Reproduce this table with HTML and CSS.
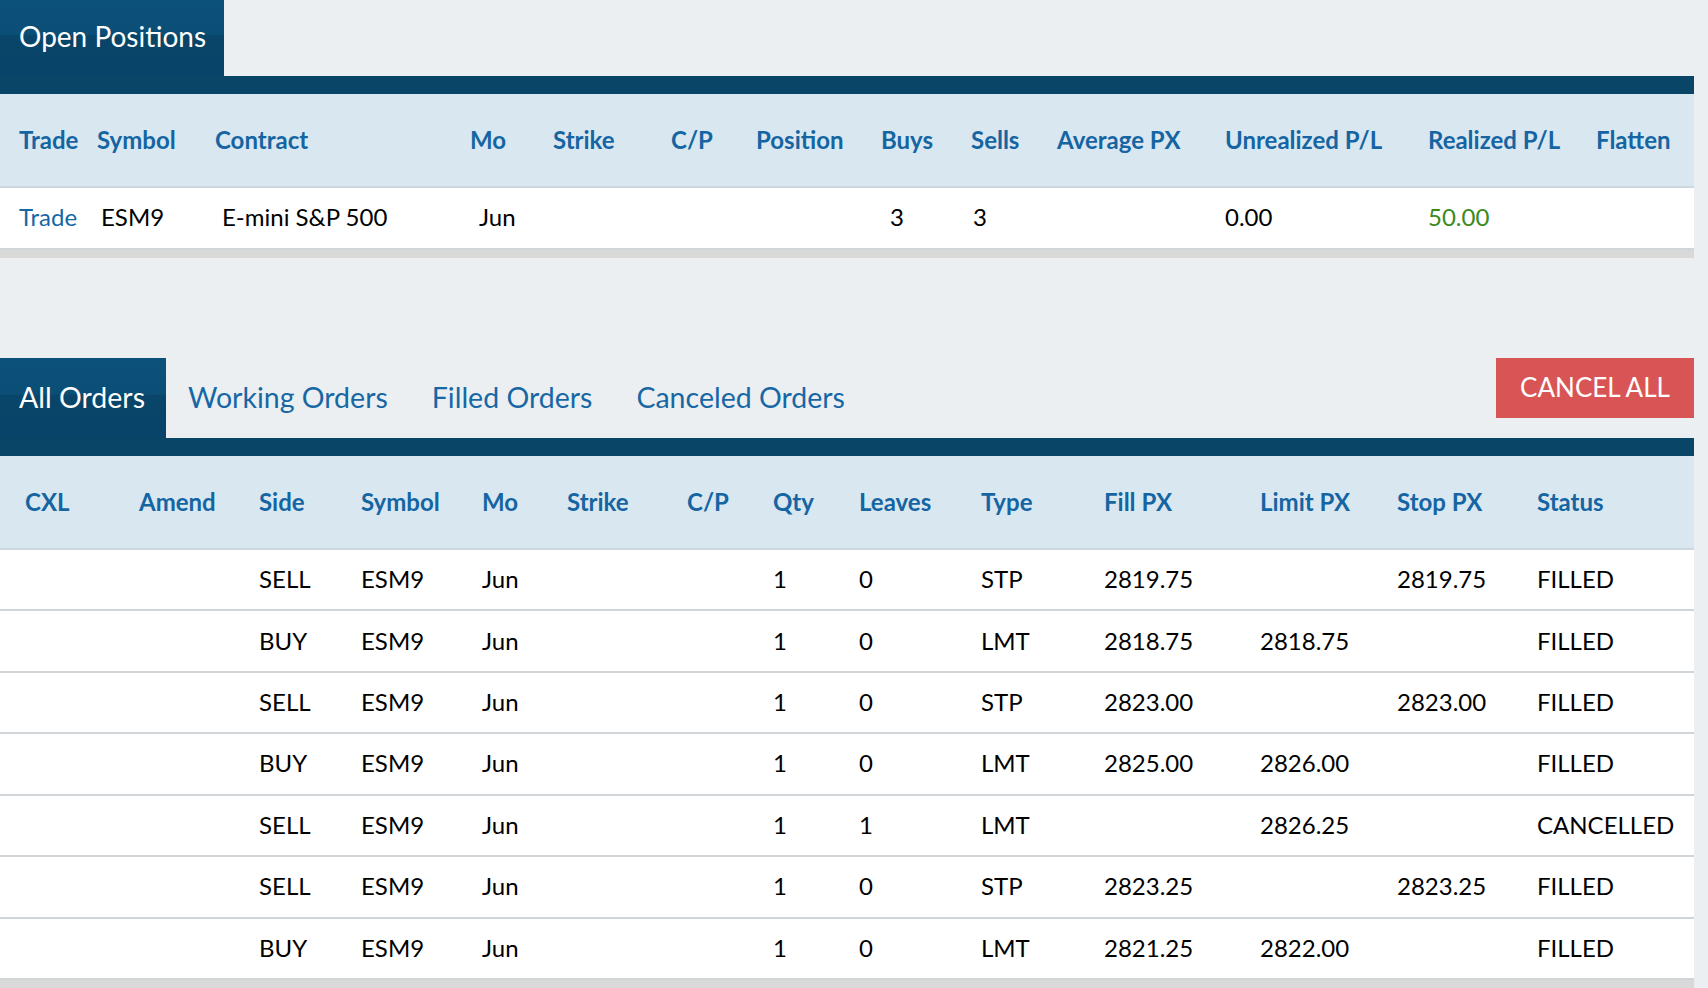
FILE: index.html
```html
<!DOCTYPE html>
<html lang="en">
<head>
<meta charset="utf-8">
<title>Positions and Orders</title>
<link rel="stylesheet" href="styles.css">
</head>
<body>
<div class="page">
  <section class="panel positions">
    <div class="tabbar tabbar-pos">
      <div class="tab active">Open Positions</div>
    </div>
    <div class="rule"></div>
    <div class="grid pos-head head">
      <div>Trade</div><div>Symbol</div><div>Contract</div><div>Mo</div><div>Strike</div><div>C/P</div><div>Position</div><div>Buys</div><div>Sells</div><div>Average PX</div><div>Unrealized P/L</div><div>Realized P/L</div><div>Flatten</div>
    </div>
    <div class="grid pos-row row">
      <div class="link">Trade</div><div>ESM9</div><div>E-mini S&amp;P 500</div><div>Jun</div><div></div><div></div><div></div><div>3</div><div>3</div><div></div><div>0.00</div><div class="gain">50.00</div><div></div>
    </div>
    <div class="foot"></div>
  </section>

  <section class="panel orders">
    <div class="tabbar tabbar-ord">
      <div class="tab active first">All Orders</div>
      <div class="tab">Working Orders</div>
      <div class="tab">Filled Orders</div>
      <div class="tab">Canceled Orders</div>
      <button class="cancel-all">CANCEL ALL</button>
    </div>
    <div class="rule"></div>
    <div class="grid ord-grid head">
      <div>CXL</div><div>Amend</div><div>Side</div><div>Symbol</div><div>Mo</div><div>Strike</div><div>C/P</div><div>Qty</div><div>Leaves</div><div>Type</div><div>Fill PX</div><div>Limit PX</div><div>Stop PX</div><div>Status</div>
    </div>
    <div class="grid ord-grid row orow"><div></div><div></div><div>SELL</div><div>ESM9</div><div>Jun</div><div></div><div></div><div>1</div><div>0</div><div>STP</div><div>2819.75</div><div></div><div>2819.75</div><div>FILLED</div></div>
    <div class="grid ord-grid row orow"><div></div><div></div><div>BUY</div><div>ESM9</div><div>Jun</div><div></div><div></div><div>1</div><div>0</div><div>LMT</div><div>2818.75</div><div>2818.75</div><div></div><div>FILLED</div></div>
    <div class="grid ord-grid row orow"><div></div><div></div><div>SELL</div><div>ESM9</div><div>Jun</div><div></div><div></div><div>1</div><div>0</div><div>STP</div><div>2823.00</div><div></div><div>2823.00</div><div>FILLED</div></div>
    <div class="grid ord-grid row orow"><div></div><div></div><div>BUY</div><div>ESM9</div><div>Jun</div><div></div><div></div><div>1</div><div>0</div><div>LMT</div><div>2825.00</div><div>2826.00</div><div></div><div>FILLED</div></div>
    <div class="grid ord-grid row orow"><div></div><div></div><div>SELL</div><div>ESM9</div><div>Jun</div><div></div><div></div><div>1</div><div>1</div><div>LMT</div><div></div><div>2826.25</div><div></div><div>CANCELLED</div></div>
    <div class="grid ord-grid row orow"><div></div><div></div><div>SELL</div><div>ESM9</div><div>Jun</div><div></div><div></div><div>1</div><div>0</div><div>STP</div><div>2823.25</div><div></div><div>2823.25</div><div>FILLED</div></div>
    <div class="grid ord-grid row orow"><div></div><div></div><div>BUY</div><div>ESM9</div><div>Jun</div><div></div><div></div><div>1</div><div>0</div><div>LMT</div><div>2821.25</div><div>2822.00</div><div></div><div>FILLED</div></div>
    <div class="foot"></div>
  </section>
</div>
</body>
</html>
```

FILE: styles.css
```css
html, body {
  margin: 0;
  padding: 0;
  background: #ebeff2;
}

body {
  font-family: Lato, "Open Sans", "Liberation Sans", sans-serif;
  color: #000;
  overflow: hidden;
}

.page {
  width: 1694px;
}

.panel.orders {
  margin-top: 100px;
}

.tabbar {
  display: flex;
  align-items: stretch;
}

.tabbar-pos {
  height: 76px;
}

.tabbar-ord {
  height: 80px;
}

.tab {
  display: flex;
  align-items: center;
  box-sizing: border-box;
  padding: 0 22px 2px;
  font-size: 28.5px;
  color: #1767a5;
  white-space: nowrap;
}

.tabbar-pos .tab {
  padding: 0 19px 4px 19px;
  width: 224px;
  font-size: 28px;
}

.tab.first {
  padding: 0 22px 2px 19px;
  width: 166px;
}

.tab.active {
  color: #fff;
  background: linear-gradient(to bottom, #0c5179 0%, #0b4f77 45%, #094568 47%, #08446a 100%);
}

.cancel-all {
  margin-left: auto;
  align-self: flex-start;
  width: 198px;
  height: 60px;
  border: 0;
  padding: 0 0 2px;
  background: #d95555;
  color: #fff;
  font-family: Lato, "Open Sans", "Liberation Sans", sans-serif;
  font-size: 26px;
}

.rule {
  height: 18px;
  background: #084567;
}

.grid {
  display: grid;
  align-items: center;
  box-sizing: border-box;
  white-space: nowrap;
}

.head {
  height: 94px;
  padding-bottom: 2px;
  background: #d9e7f1;
  border-bottom: 2px solid #cdd6dc;
  font-weight: 700;
  font-size: 24px;
  color: #1565a2;
}

.row {
  background: #fff;
  font-size: 24px;
}

.pos-head {
  padding-left: 19px;
  grid-template-columns: 78px 118px 255px 83px 118px 85px 125px 90px 86px 168px 203px 168px 1fr;
}

.pos-row {
  height: 60px;
  padding-left: 19px;
  padding-bottom: 4px;
  grid-template-columns: 82px 121px 257px 74px 118px 85px 134px 83px 84px 168px 203px 168px 1fr;
}

.ord-grid {
  padding-left: 25px;
  grid-template-columns: 114px 120px 102px 121px 85px 120px 86px 86px 122px 123px 156px 137px 140px 1fr;
}

.orow {
  height: 61.43px;
  padding-bottom: 2px;
  border-top: 2px solid #d0d5da;
}

.head + .orow {
  border-top: 0;
  height: 59.43px;
}

.link {
  color: #1767a5;
}

.gain {
  color: #3b8a1c;
}

.foot {
  height: 8px;
  background: #d9d9d9;
  border-top: 2px solid #d0d5d8;
}
```
